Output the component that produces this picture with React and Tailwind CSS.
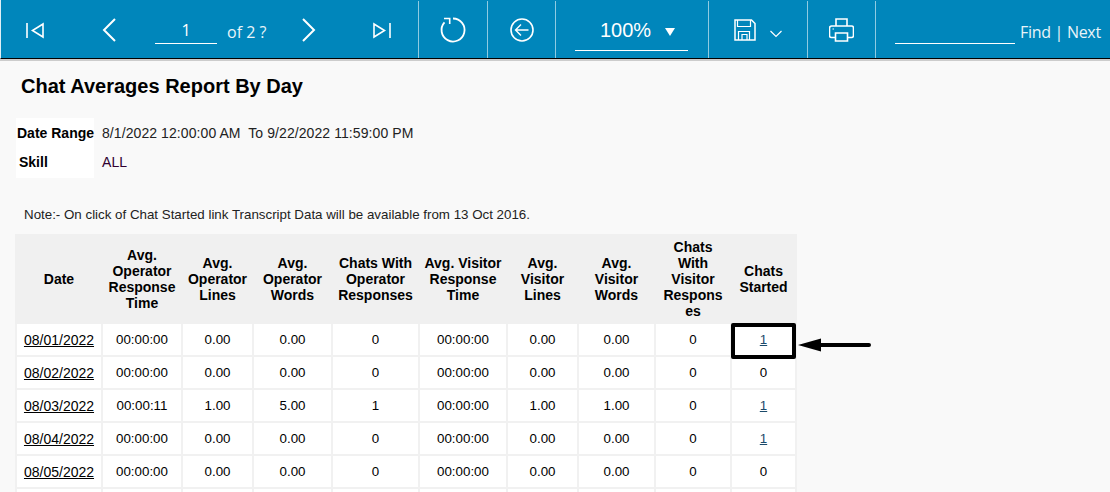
const headers = [
  ["Date"],
  ["Avg.", "Operator", "Response", "Time"],
  ["Avg.", "Operator", "Lines"],
  ["Avg.", "Operator", "Words"],
  ["Chats With", "Operator", "Responses"],
  ["Avg. Visitor", "Response", "Time"],
  ["Avg.", "Visitor", "Lines"],
  ["Avg.", "Visitor", "Words"],
  ["Chats", "With", "Visitor", "Respons", "es"],
  ["Chats", "Started"],
];

const widths = [86, 80, 71, 79, 87, 88, 71, 77, 76, 65];

const rows = [
  ["08/01/2022", "00:00:00", "0.00", "0.00", "0", "00:00:00", "0.00", "0.00", "0", "1"],
  ["08/02/2022", "00:00:00", "0.00", "0.00", "0", "00:00:00", "0.00", "0.00", "0", "0"],
  ["08/03/2022", "00:00:11", "1.00", "5.00", "1", "00:00:00", "1.00", "1.00", "0", "1"],
  ["08/04/2022", "00:00:00", "0.00", "0.00", "0", "00:00:00", "0.00", "0.00", "0", "1"],
  ["08/05/2022", "00:00:00", "0.00", "0.00", "0", "00:00:00", "0.00", "0.00", "0", "0"],
  ["", "", "", "", "", "", "", "", "", ""],
];

function Icon({ children, w = 24, h = 24, className = "" }) {
  return (
    <svg width={w} height={h} viewBox={`0 0 ${w} ${h}`} fill="none" stroke="white" strokeWidth="1.6" className={className}>
      {children}
    </svg>
  );
}

function Section({ width, children, className = "" }) {
  return (
    <div className={`h-[57px] shrink-0 border-r border-[#8fcbe2] flex items-center ${className}`} style={{ width }}>
      {children}
    </div>
  );
}

function Toolbar() {
  return (
    <div className="h-[59px] pt-px bg-[#0086bb] border-b border-black flex text-white font-['Open_Sans',sans-serif] border-l border-l-[#dfeff6] box-border">
      {/* paging */}
      <Section width={418} className="relative">
        <Icon w={20} h={20} className="ml-[24px]">
          <path d="M2 3v15M18 4 7.5 10.5 18 17z" />
        </Icon>
        <Icon w={18} h={28} className="ml-[55px]">
          <path d="M15 3 4 14l11 11" strokeWidth="2" />
        </Icon>
        <div className="ml-[37px] w-[62px] h-[26px] mt-[3px] border-b border-white text-center text-[16px] leading-[24px]">1</div>
        <span className="ml-[10px] mt-[4px] text-[16px] leading-[24px] text-[#e8f4f9]">of 2 ?</span>
        <Icon w={18} h={28} className="ml-[34px]">
          <path d="M3 3l11 11L3 25" strokeWidth="2" />
        </Icon>
        <Icon w={20} h={20} className="ml-[54px]">
          <path d="M18 3v15M2 4l10.500 6.500L2 17z" />
        </Icon>
      </Section>
      {/* refresh */}
      <Section width={69} className="justify-center">
        <Icon w={28} h={28}>
          <path d="M14 2.500A11.500 11.500 0 1 1 5.500 6.300" strokeWidth="1.800" />
          <path d="M5 2.500h5.700V8" strokeWidth="1.600" />
        </Icon>
      </Section>
      {/* back */}
      <Section width={68} className="justify-center">
        <Icon w={26} h={26}>
          <circle cx="13" cy="13" r="11" strokeWidth="1.600" />
          <path d="M19.500 13H6.500M12 7.500 6.500 13l5.500 5.500" strokeWidth="1.400" />
        </Icon>
      </Section>
      {/* zoom */}
      <Section width={153} className="relative">
        <div className="ml-[19px] w-[113px] h-[37px] mt-[6px] border-b border-white flex items-center font-['Liberation_Sans',sans-serif]">
          <span className="ml-[25px] mb-[4px] text-[20px] leading-[24px]">100%</span>
          <svg width="10" height="8" viewBox="0 0 10 8" className="ml-[14px] mb-[1px]">
            <path d="M0 0h10L5 8z" fill="white" />
          </svg>
        </div>
      </Section>
      {/* save */}
      <Section width={99}>
        <Icon w={22} h={22} className="ml-[25px]">
          <path d="M1 1h16.500L21 4.500V21H1z" strokeWidth="1.500" />
          <path d="M3.500 1v6.500h13V1M4.500 21v-8.500h11V21M8 21v-5.500h5V21" strokeWidth="1.200" />
        </Icon>
        <Icon w={14} h={10} className="ml-[13px] mt-[8px]">
          <path d="M1.500 2 7 7.500 12.500 2" strokeWidth="1.200" />
        </Icon>
      </Section>
      {/* print */}
      <Section width={68} className="justify-center">
        <Icon w={25} h={24}>
          <path d="M7 8V1h11v7" />
          <path d="M6 19.500H2.500a2 2 0 0 1-2-2V10a2 2 0 0 1 2-2h20a2 2 0 0 1 2 2v7.500a2 2 0 0 1-2 2H19" />
          <path d="M6.500 15h12v8h-12z" />
          <path d="M3.500 11h1.500" strokeWidth="1" />
        </Icon>
      </Section>
      {/* find */}
      <div className="flex-1 flex items-center h-[57px]">
        <div className="ml-[19px] w-[120px] h-[26px] mt-[3px] border-b border-white" />
        <span className="ml-[5px] mt-[4px] text-[16px] leading-[24px] tracking-[-0.3px] text-[#e8f4f9] whitespace-nowrap">Find | Next</span>
      </div>
    </div>
  );
}

function ReportTable() {
  return (
    <div className="relative w-[782px] ml-[15px]">
      <table className="table-fixed border-collapse w-[782px] text-center text-black">
        <colgroup>
          {widths.map((w, i) => (
            <col key={i} style={{ width: w }} />
          ))}
        </colgroup>
        <thead>
          <tr className="h-[88px] bg-[#f0f0f0]">
            {headers.map((lines, i) => (
              <th key={i} className="p-0 border-2 border-[#f0f0f0] text-[14px] leading-[16px] font-bold">
                {lines.map((l) => (
                  <div key={l}>{l}</div>
                ))}
              </th>
            ))}
          </tr>
        </thead>
        <tbody>
          {rows.map((row, r) => (
            <tr key={r} className="h-[33px] bg-white">
              {row.map((cell, c) => {
                const isLink = (c === 0 || c === 9) && cell && cell !== "0";
                return (
                  <td
                    key={c}
                    className={`p-0 border-2 border-[#f1f1f1] ${c === 0 ? "text-[14px]" : "text-[13.33px]"} leading-[16px] whitespace-nowrap`}
                  >
                    {isLink ? (
                      <a href="#" className={`underline ${c === 9 ? "text-[#1b4a6b]" : "text-black"}`}>
                        {cell}
                      </a>
                    ) : (
                      cell
                    )}
                  </td>
                );
              })}
            </tr>
          ))}
        </tbody>
      </table>
      {/* annotation: box round the first Chats Started value */}
      <div className="absolute left-[716px] top-[89px] w-[65px] h-[36px] border-[4px] border-black rounded-[2px]" />
      {/* annotation: arrow */}
      <svg width="73" height="16" viewBox="0 0 73 16" className="absolute left-[783px] top-[103px]">
        <path d="M0 8 23 1.500v4.500h48a2 2 0 0 1 0 4H23v4.500z" fill="black" />
      </svg>
    </div>
  );
}

export default function App() {
  return (
    <div className="h-screen overflow-hidden bg-[#f9f9f9] font-['Liberation_Sans',Arial,sans-serif] text-black">
      <Toolbar />
      <div className="h-[2px] bg-[#cccccc]" />
      <h1 className="ml-[21px] mt-[13px] text-[20px] leading-[24px] font-bold">Chat Averages Report By Day</h1>
      <div className="mt-[20px] ml-[16px] flex items-stretch text-[14px] leading-[30px] h-[60px]">
        <div className="w-[78px] bg-white font-bold text-[14px] pl-[1px] whitespace-nowrap">
          <div>Date Range</div>
          <div className="pl-[2px] -mt-px">Skill</div>
        </div>
        <div className="pl-[8px] text-[#222] tracking-[0.08px]">
          <div>8/1/2022 12:00:00 AM&nbsp; To 9/22/2022 11:59:00 PM</div>
          <div className="text-[#300030] -mt-px">ALL</div>
        </div>
      </div>
      <p className="ml-[24px] mt-[29px] text-[13.33px] leading-[16px] text-[#222]">
        Note:- On click of Chat Started link Transcript Data will be available from 13 Oct 2016.
      </p>
      <div className="mt-[11px]">
        <ReportTable />
      </div>
    </div>
  );
}
